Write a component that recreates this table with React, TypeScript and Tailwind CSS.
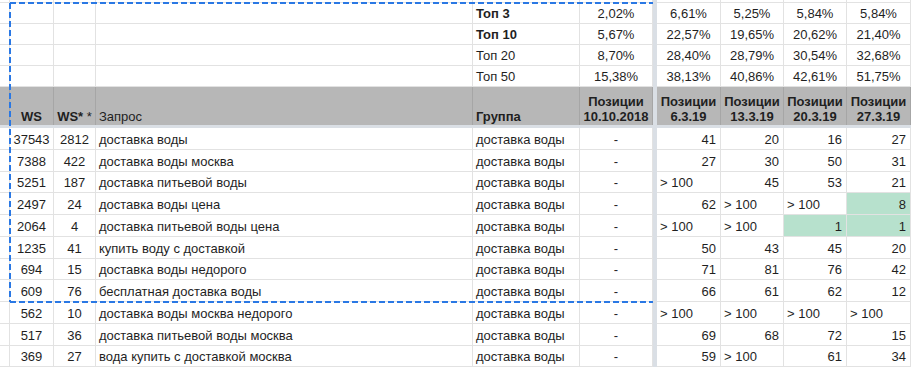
import type { ReactNode } from "react";

const cols =
  "grid grid-cols-[10px_44px_42px_377px_107px_73px_4px_64px_63px_63px_1fr]";

type Pos = { v: string; green?: boolean };

const top = [
  { label: "Топ 3", bold: true, base: "2,02%", vals: ["6,61%", "5,25%", "5,84%", "5,84%"] },
  { label: "Топ 10", bold: true, base: "5,67%", vals: ["22,57%", "19,65%", "20,62%", "21,40%"] },
  { label: "Топ 20", bold: false, base: "8,70%", vals: ["28,40%", "28,79%", "30,54%", "32,68%"] },
  { label: "Топ 50", bold: false, base: "15,38%", vals: ["38,13%", "40,86%", "42,61%", "51,75%"] },
];

const rows: { ws: string; ws2: string; q: string; pos: Pos[] }[] = [
  { ws: "37543", ws2: "2812", q: "доставка воды", pos: [{ v: "41" }, { v: "20" }, { v: "16" }, { v: "27" }] },
  { ws: "7388", ws2: "422", q: "доставка воды москва", pos: [{ v: "27" }, { v: "30" }, { v: "50" }, { v: "31" }] },
  { ws: "5251", ws2: "187", q: "доставка питьевой воды", pos: [{ v: "> 100" }, { v: "45" }, { v: "53" }, { v: "21" }] },
  { ws: "2497", ws2: "24", q: "доставка воды цена", pos: [{ v: "62" }, { v: "> 100" }, { v: "> 100" }, { v: "8", green: true }] },
  { ws: "2064", ws2: "4", q: "доставка питьевой воды цена", pos: [{ v: "> 100" }, { v: "> 100" }, { v: "1", green: true }, { v: "1", green: true }] },
  { ws: "1235", ws2: "41", q: "купить воду с доставкой", pos: [{ v: "50" }, { v: "43" }, { v: "45" }, { v: "20" }] },
  { ws: "694", ws2: "15", q: "доставка воды недорого", pos: [{ v: "71" }, { v: "81" }, { v: "76" }, { v: "42" }] },
  { ws: "609", ws2: "76", q: "бесплатная доставка воды", pos: [{ v: "66" }, { v: "61" }, { v: "62" }, { v: "12" }] },
  { ws: "562", ws2: "10", q: "доставка воды москва недорого", pos: [{ v: "> 100" }, { v: "> 100" }, { v: "> 100" }, { v: "> 100" }] },
  { ws: "517", ws2: "36", q: "доставка питьевой воды москва", pos: [{ v: "69" }, { v: "68" }, { v: "72" }, { v: "15" }] },
  { ws: "369", ws2: "27", q: "вода купить с доставкой москва", pos: [{ v: "59" }, { v: "> 100" }, { v: "61" }, { v: "34" }] },
];

function Cell({ children, className = "" }: { children?: ReactNode; className?: string }) {
  return (
    <div
      className={`flex items-end overflow-hidden whitespace-nowrap border-r border-b border-[#e2e2e2] px-[3px] pb-[2px] leading-[15px] ${className}`}
    >
      {children}
    </div>
  );
}

const Sep = () => <div className="bg-[#dadfe5]" />;

function HeadCell({ children, className = "" }: { children?: ReactNode; className?: string }) {
  return (
    <div
      className={`flex flex-col justify-end overflow-hidden whitespace-nowrap border-r border-[#a6a6a6] px-[3px] pb-[1px] leading-[15px] ${className}`}
    >
      {children}
    </div>
  );
}

export default function App() {
  return (
    <div className="relative h-[369px] w-[911px] overflow-hidden bg-white font-['Liberation_Sans',Arial,sans-serif] text-[13px] text-[#1f1f1f]">
      {/* partial row cut off at the top */}
      <div className={`${cols} h-[3px]`}>
        {Array.from({ length: 6 }).map((_, i) => (
          <div key={i} className="border-r border-b border-[#e2e2e2]" />
        ))}
        <Sep />
        {Array.from({ length: 4 }).map((_, i) => (
          <div key={i} className="border-r border-b border-[#e2e2e2]" />
        ))}
      </div>

      {top.map((r) => (
        <div key={r.label} className={`${cols} h-[21px]`}>
          <Cell />
          <Cell />
          <Cell />
          <Cell />
          <Cell className={r.bold ? "font-bold" : ""}>{r.label}</Cell>
          <Cell className="justify-center">{r.base}</Cell>
          <Sep />
          {r.vals.map((v, i) => (
            <Cell key={i} className="justify-center">
              {v}
            </Cell>
          ))}
        </div>
      ))}

      <div className={`${cols} h-[38px] bg-[#b7b7b7] font-bold`}>
        <HeadCell />
        <HeadCell className="items-center">WS</HeadCell>
        <HeadCell className="items-center">
          <span>
            WS*<span className="font-normal"> *</span>
          </span>
        </HeadCell>
        <HeadCell className="font-normal">Запрос</HeadCell>
        <HeadCell>Группа</HeadCell>
        <HeadCell className="items-center">
          <span>Позиции</span>
          <span>10.10.2018</span>
        </HeadCell>
        <Sep />
        {["6.3.19", "13.3.19", "20.3.19", "27.3.19"].map((d) => (
          <HeadCell key={d} className="items-center">
            <span>Позиции</span>
            <span>{d}</span>
          </HeadCell>
        ))}
      </div>
      <div className="h-[3px] bg-[#dadfe5]" />

      {rows.map((r) => (
        <div key={r.q} className={`${cols} h-[21.75px]`}>
          <Cell />
          <Cell className="justify-center">{r.ws}</Cell>
          <Cell className="justify-center">{r.ws2}</Cell>
          <Cell>{r.q}</Cell>
          <Cell>доставка воды</Cell>
          <Cell className="justify-center">-</Cell>
          <Sep />
          {r.pos.map((p, i) => (
            <Cell
              key={i}
              className={`${p.v.startsWith(">") ? "" : "justify-end pr-[4px]"} ${
                p.green ? "bg-[#b7e1cd]" : ""
              }`}
            >
              {p.v}
            </Cell>
          ))}
        </div>
      ))}

      {/* copy selection outline */}
      <svg
        className="pointer-events-none absolute left-0 top-0"
        width="911"
        height="369"
      >
        <g stroke="#2a78e4" strokeWidth="2" strokeDasharray="6 3" fill="none">
          <line x1="10" y1="3" x2="653" y2="3" />
          <line x1="10" y1="3" x2="10" y2="302" />
          <line x1="10" y1="302" x2="653" y2="302" />
        </g>
      </svg>
    </div>
  );
}
